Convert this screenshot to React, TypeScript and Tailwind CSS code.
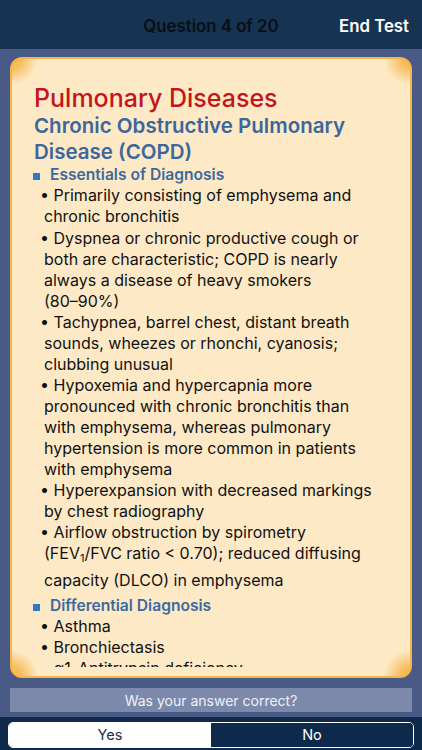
import React from "react";

type Para = { lines: React.ReactNode[] };

const essentials: Para[] = [
  { lines: ["• Primarily consisting of emphysema and", "chronic bronchitis"] },
  {
    lines: [
      "• Dyspnea or chronic productive cough or",
      "both are characteristic; COPD is nearly",
      "always a disease of heavy smokers",
      "(80–90%)",
    ],
  },
  {
    lines: [
      "• Tachypnea, barrel chest, distant breath",
      "sounds, wheezes or rhonchi, cyanosis;",
      "clubbing unusual",
    ],
  },
  {
    lines: [
      "• Hypoxemia and hypercapnia more",
      "pronounced with chronic bronchitis than",
      "with emphysema, whereas pulmonary",
      "hypertension is more common in patients",
      "with emphysema",
    ],
  },
  { lines: ["• Hyperexpansion with decreased markings", "by chest radiography"] },
];

function Line({ children, first }: { children: React.ReactNode; first?: boolean }) {
  return (
    <div className={"whitespace-nowrap h-[21px] leading-[21px] " + (first ? "-ml-[4px]" : "")}>
      {children}
    </div>
  );
}

function SectionHeader({ children }: { children: React.ReactNode }) {
  return (
    <div className="flex items-center h-[20px] leading-[20px] -ml-[1px] text-[15.6px] font-semibold text-[#3b69a0] whitespace-nowrap">
      <span className="inline-block w-[7px] h-[7px] bg-[#2b7cc4] mr-[10px] mt-[2px]" />
      {children}
    </div>
  );
}

export default function App() {
  return (
    <div
      className="w-full h-[750px] flex flex-col bg-[#4a5a86] overflow-hidden"
      style={{ fontFamily: 'Inter, "Liberation Sans", Arial, sans-serif' }}
    >
      {/* Top bar */}
      <div className="h-[49px] shrink-0 bg-[#163351] grid grid-cols-[1fr_auto_1fr] items-center pt-[4px]">
        <div />
        <div className="text-[16.8px] font-semibold text-[#0a0f16] whitespace-nowrap">Question 4 of 20</div>
        <div className="text-right pr-[13px] text-[16.8px] font-semibold text-white whitespace-nowrap">End Test</div>
      </div>

      {/* Card */}
      <div className="mx-[10px] mt-[8px] h-[621px] shrink-0 rounded-[12px] border-2 border-[#f3b648] flex flex-col pb-[9px] bg-[#fee9c6] bg-[radial-gradient(circle_at_0_0,#f6b443_0,#f8c064_10px,rgba(254,233,198,0)_26px),radial-gradient(circle_at_100%_0,#f6b443_0,#f8c064_10px,rgba(254,233,198,0)_26px),radial-gradient(circle_at_0_100%,#f6b443_0,#f8c064_10px,rgba(254,233,198,0)_26px),radial-gradient(circle_at_100%_100%,#f6b443_0,#f8c064_10px,rgba(254,233,198,0)_26px)]">
        <div className="flex-1 overflow-hidden pl-[22px] pt-[24px] text-[#111111]">
          <div className="text-[25px] leading-[30px] font-medium text-[#c4141c] whitespace-nowrap">
            Pulmonary Diseases
          </div>
          <div className="text-[20.5px] leading-[26px] font-semibold text-[#3b679c] whitespace-nowrap">
            <div>Chronic Obstructive Pulmonary</div>
            <div>Disease (COPD)</div>
          </div>
          <SectionHeader>Essentials of Diagnosis</SectionHeader>
          <div className="pl-[10px] text-[16px]">
            {essentials.map((p, i) => (
              <div key={i} className={i === 1 ? "mt-[1px]" : ""}>
                {p.lines.map((l, j) => (
                  <Line key={j} first={j === 0}>
                    {l}
                  </Line>
                ))}
              </div>
            ))}
            <div>
              <Line first>• Airflow obstruction by spirometry</Line>
              <div className="whitespace-nowrap h-[21px] leading-[21px]">
                (FEV<sub className="text-[11px]">1</sub>/FVC ratio &lt; 0.70); reduced diffusing
              </div>
              <div className="whitespace-nowrap h-[21px] leading-[21px] mt-[6px]">capacity (DLCO) in emphysema</div>
            </div>
          </div>
          <div className="mt-[5px]">
            <SectionHeader>Differential Diagnosis</SectionHeader>
          </div>
          <div className="pl-[10px] text-[16px]">
            <Line first>• Asthma</Line>
            <Line first>• Bronchiectasis</Line>
            <Line first>• α1-Antitrypsin deficiency</Line>
            <Line first>• Cystic fibrosis</Line>
          </div>
        </div>
      </div>

      {/* Question bar */}
      <div className="mx-[10px] mt-[10px] h-[24px] shrink-0 bg-[#7d89ab] flex items-center justify-center text-[14px] text-[#eef1f8] whitespace-nowrap">
        Was your answer correct?
      </div>

      {/* Bottom segmented control */}
      <div className="mt-[5px] flex-1 bg-[#0f2a4b] px-[8px] pt-[5px]">
        <div className="h-[26px] flex border border-white rounded-[5px] overflow-hidden text-[14.5px]">
          <div className="flex-1 bg-white text-[#1b2e4c] flex items-center justify-center">Yes</div>
          <div className="flex-1 bg-[#0d2a4d] text-white flex items-center justify-center">No</div>
        </div>
      </div>
    </div>
  );
}
